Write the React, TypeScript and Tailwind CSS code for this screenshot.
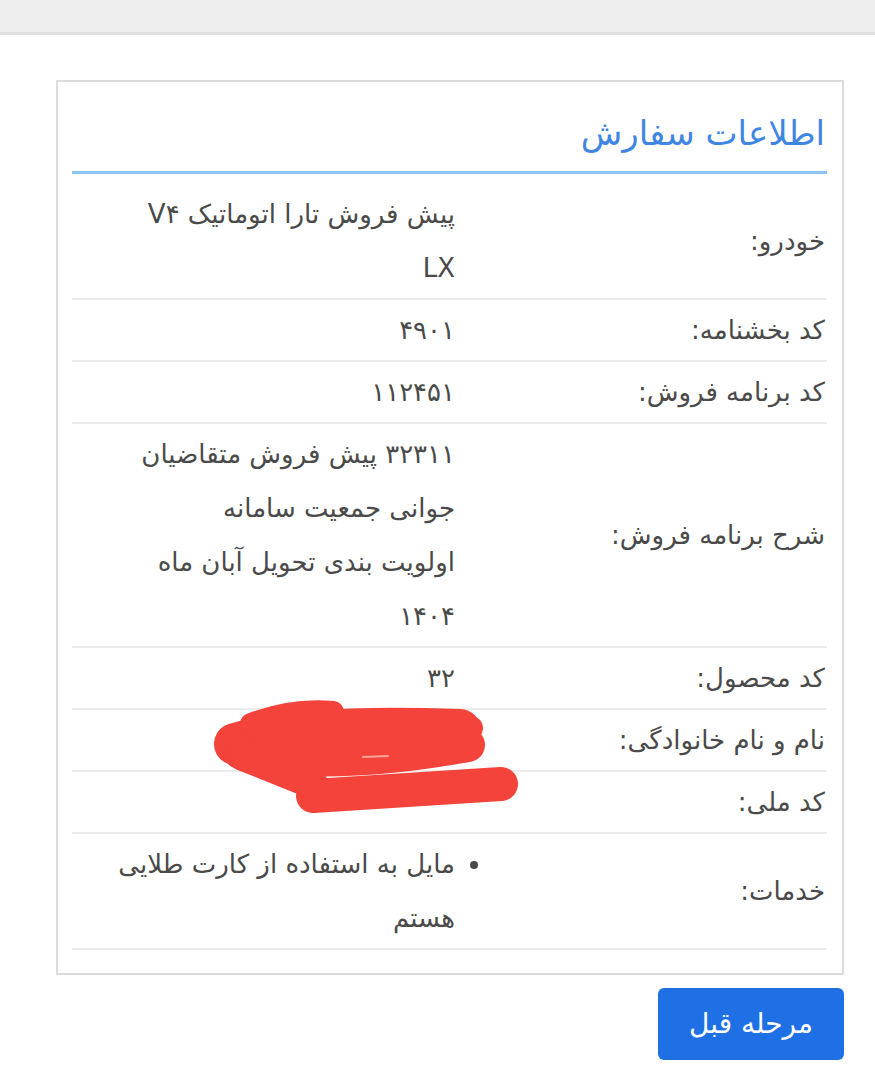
import React from "react";

interface Row {
  label: string;
  lines: string[];
  list?: boolean;
}

const rows: Row[] = [
  { label: "خودرو:", lines: ["پیش فروش تارا اتوماتیک V۴", "LX"] },
  { label: "کد بخشنامه:", lines: ["۴۹۰۱"] },
  { label: "کد برنامه فروش:", lines: ["۱۱۲۴۵۱"] },
  {
    label: "شرح برنامه فروش:",
    lines: [
      "۳۲۳۱۱ پیش فروش متقاضیان",
      "جوانی جمعیت سامانه",
      "اولویت بندی تحویل آبان ماه",
      "۱۴۰۴",
    ],
  },
  { label: "کد محصول:", lines: ["۳۲"] },
  // redacted in the screenshot
  { label: "نام و نام خانوادگی:", lines: [""] },
  { label: "کد ملی:", lines: [""] },
  {
    label: "خدمات:",
    lines: ["مایل به استفاده از کارت طلایی", "هستم"],
    list: true,
  },
];

function Scribble() {
  return (
    <svg
      className="absolute left-[155px] top-[618px] pointer-events-none"
      width="320"
      height="120"
      viewBox="0 0 320 120"
    >
      <g fill="none" stroke="#f4433a" strokeLinecap="round" strokeLinejoin="round">
        <path d="M22 44 Q 87 24 247 30" strokeWidth="42" />
        <path d="M27 52 Q 117 70 255 45" strokeWidth="34" />
        <path d="M38 24 Q 80 8 120 12" strokeWidth="22" />
        <path d="M30 56 L 100 84" strokeWidth="30" />
        <path d="M100 96 L 288 84" strokeWidth="34" />
        <path d="M238 22 L 258 28" strokeWidth="24" />
      </g>
      <path d="M150 57 L 175 56" stroke="#f7a39c" strokeWidth="2" strokeLinecap="round" />
    </svg>
  );
}

export default function App() {
  return (
    <div
      dir="rtl"
      className="min-h-screen bg-white text-[#4a4a4a]"
      style={{ fontFamily: '"DejaVu Sans", Tahoma, sans-serif' }}
    >
      {/* top bar */}
      <div className="h-[35px] bg-[#eeeeee] border-b-[3px] border-[#e1e1e1]" />

      <div className="mr-[31px] w-[788px] mt-[45px]">
        {/* card */}
        <div className="relative border-2 border-[#dcdcdc] pl-[14px] pr-[15px] pb-[23px]">
          <div className="pt-[29px] pb-[16px] border-b-[3px] border-[#8ec4f2]">
            <h2 className="pr-[2px] text-[34px] leading-[44px] text-[#3f86e2]">
              اطلاعات سفارش
            </h2>
          </div>

          <div className="mt-[10px]">
            {rows.map((row) => (
              <div
                key={row.label}
                className="grid grid-cols-[372px_1fr] items-center border-b-2 border-[#ececec] py-[3px] text-[26px] leading-[54px]"
              >
                <div className="pr-[2px] whitespace-nowrap">{row.label}</div>
                <div>
                  {row.list ? (
                    <ul className="list-disc list-outside">
                      <li>
                        {row.lines.map((l) => (
                          <span key={l} className="block whitespace-nowrap">
                            {l}
                          </span>
                        ))}
                      </li>
                    </ul>
                  ) : (
                    row.lines.map((l, i) => (
                      <span key={i} className="block whitespace-nowrap min-h-[54px]">
                        {l}
                      </span>
                    ))
                  )}
                </div>
              </div>
            ))}
          </div>

          <Scribble />
        </div>

        <div className="mt-[13px] flex">
          <button className="w-[186px] h-[72px] rounded-[6px] bg-[#1f6fe5] text-white text-[28px]">
            مرحله قبل
          </button>
        </div>
      </div>
    </div>
  );
}
